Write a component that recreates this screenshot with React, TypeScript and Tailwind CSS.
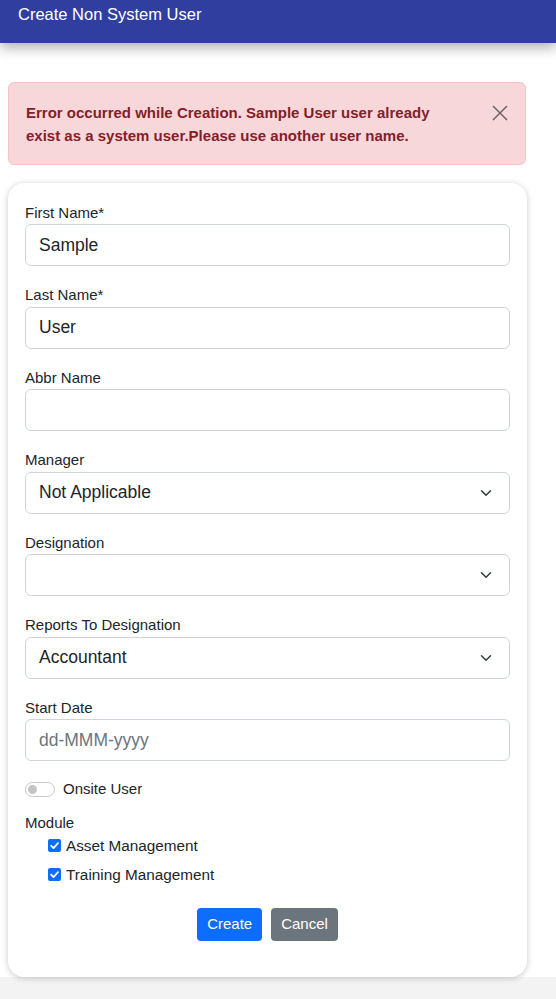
import React from "react";

const Chevron = () => (
  <svg width="16" height="12" viewBox="0 0 16 16" className="pointer-events-none absolute right-[15px] top-1/2 -translate-y-1/2">
    <path d="M2 5l6 6 6-6" fill="none" stroke="#343a40" strokeWidth="2" strokeLinecap="round" strokeLinejoin="round" />
  </svg>
);

const Field = ({ label, value, placeholder }: { label: string; value?: string; placeholder?: string }) => (
  <div className="mb-[18px]">
    <div className="leading-[22.5px] text-[15px] text-[#212529]">{label}</div>
    <div className="h-[42px] rounded-[6px] border border-[#ced4da] bg-white px-[13px] flex items-center text-[17.5px]">
      {value ? <span className="text-[#212529]">{value}</span> : <span className="text-[#6c757d]">{placeholder}</span>}
    </div>
  </div>
);

const SelectField = ({ label, value }: { label: string; value: string }) => (
  <div className="mb-[18px]">
    <div className="leading-[22.5px] text-[15px] text-[#212529]">{label}</div>
    <div className="relative h-[42px] rounded-[6px] border border-[#ced4da] bg-white px-[13px] flex items-center text-[17.5px] text-[#212529]">
      <span>{value}</span>
      <Chevron />
    </div>
  </div>
);

const Check = ({ label }: { label: string }) => (
  <div className="flex items-center h-[22.5px] pl-[23px]">
    <div className="w-[13px] h-[13px] rounded-[2px] bg-[#0d6efd] flex items-center justify-center">
      <svg width="11" height="11" viewBox="0 0 12 12">
        <path d="M2.3 6.2l2.6 2.6 4.9-5.4" fill="none" stroke="#fff" strokeWidth="1.9" strokeLinecap="round" strokeLinejoin="round" />
      </svg>
    </div>
    <span className="ml-[5px] text-[15.3px] text-[#212529] leading-[22.5px]">{label}</span>
  </div>
);

export default function App() {
  return (
    <div className="min-h-[999px] bg-[#f3f3f3]" style={{ fontFamily: '"Liberation Sans", Arial, sans-serif' }}>
      <div className="bg-white pb-0 h-[977px] relative">
        <div className="relative z-10 h-[43px] bg-[#303f9f] pl-[18px] pt-[2px] text-white text-[16.5px] leading-[24px] shadow-[0_5px_12px_rgba(0,0,0,0.3)]">
          Create Non System User
        </div>

        <div className="ml-2 mt-[39px] w-[518px] h-[83px] rounded-[6px] border border-[#f5c2c7] bg-[#f8d7da] pl-[17px] pt-[18px] flex">
          <div className="text-[15px] font-bold leading-[23px] text-[#842029] w-[440px]">
            Error occurred while Creation. Sample User user already
            <br />
            exist as a system user.Please use another user name.
          </div>
          <div className="ml-[26px] mt-[4px]">
            <svg width="16" height="16" viewBox="0 0 16 16">
              <path d="M1 1l14 14M15 1L1 15" stroke="#000" strokeOpacity="0.55" strokeWidth="1.5" />
            </svg>
          </div>
        </div>

        <div className="ml-2 mt-[18px] w-[519px] rounded-[16px] bg-white shadow-[0_1px_6px_rgba(0,0,0,0.22)] px-[17px] pt-[18.5px] pb-[36px]">
          <Field label="First Name*" value="Sample" />
          <Field label="Last Name*" value="User" />
          <Field label="Abbr Name" />
          <SelectField label="Manager" value="Not Applicable" />
          <SelectField label="Designation" value="" />
          <SelectField label="Reports To Designation" value="Accountant" />
          <Field label="Start Date" placeholder="dd-MMM-yyyy" />

          <div className="flex items-center h-[22.5px] mb-[11.5px] -mt-[1px]">
            <div className="relative w-[30px] h-[15px] rounded-full border border-[#c8c8c8] bg-white">
              <div className="absolute left-[2px] top-[2px] w-[9px] h-[9px] rounded-full bg-[#c4c4c4]" />
            </div>
            <span className="ml-[8px] text-[15px] text-[#212529]">Onsite User</span>
          </div>

          <div className="leading-[22.5px] text-[15px] text-[#212529]">Module</div>
          <div className="flex flex-col gap-[6.5px]">
            <Check label="Asset Management" />
            <Check label="Training Management" />
          </div>

          <div className="mt-[21.5px] flex justify-center gap-[9px]">
            <button className="h-[33px] px-[10px] rounded-[4px] bg-[#0d6efd] text-white text-[15px]">Create</button>
            <button className="h-[33px] px-[10px] rounded-[4px] bg-[#6c757d] text-white text-[15px]">Cancel</button>
          </div>
        </div>
      </div>
    </div>
  );
}
